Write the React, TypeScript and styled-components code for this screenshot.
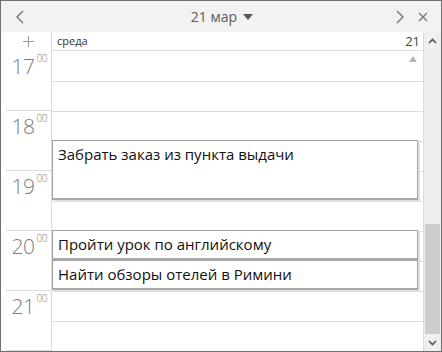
import * as React from 'react'
import styled, { createGlobalStyle } from 'styled-components'

const GlobalStyle = createGlobalStyle`
  html, body {
    margin: 0;
    padding: 0;
    background: #fff;
  }
  body {
    font-family: 'Open Sans', 'Noto Sans', sans-serif;
  }
`

type CalendarEvent = {
  title: string
  top: number
  height: number
}

const HOURS = [17, 18, 19, 20, 21]

const EVENTS: CalendarEvent[] = [
  { title: 'Забрать заказ из пункта выдачи', top: 108, height: 60 },
  { title: 'Пройти урок по английскому', top: 198, height: 30 },
  { title: 'Найти обзоры отелей в Римини', top: 228, height: 30 },
]

const Window = styled.div`
  box-sizing: border-box;
  width: 442px;
  height: 352px;
  border: 1px solid #707070;
  display: flex;
  flex-direction: column;
  overflow: hidden;
  background: #fff;
`

const Header = styled.div`
  height: 31px;
  flex-shrink: 0;
  background: #f2f2f2;
  display: flex;
  align-items: center;
  padding: 0 11px 0 12px;
`

const NavButton = styled.div`
  width: 14px;
  height: 14px;
  display: flex;
  align-items: center;
  justify-content: center;
`

const Title = styled.div`
  flex: 1;
  display: flex;
  align-items: center;
  justify-content: center;
  gap: 6px;
  font-size: 14px;
  color: #5a5a5a;
  padding-left: 24px;
`

const RightButtons = styled.div`
  display: flex;
  align-items: center;
  gap: 9px;
`

const Body = styled.div`
  flex: 1;
  display: flex;
  min-height: 0;
`

const Gutter = styled.div`
  width: 50px;
  flex-shrink: 0;
  border-right: 1px solid #dcdcdc;
  display: flex;
  flex-direction: column;
`

const PlusCell = styled.div`
  height: 20px;
  display: flex;
  align-items: center;
  justify-content: center;
  padding-left: 4px;
`

const HourBlock = styled.div`
  height: 60px;
  flex-shrink: 0;
  box-sizing: border-box;
  margin-left: 5px;
  border-bottom: 1px solid #dcdcdc;
  display: flex;
  justify-content: flex-end;
  padding: 2px 4px 0 0;
`

const HourLabel = styled.div`
  display: flex;
  align-items: flex-start;
  color: #7d7d7d;
  font-weight: 300;
  font-size: 21px;
  line-height: 26px;
  letter-spacing: -0.5px;

  sup {
    font-size: 10px;
    line-height: 12px;
    margin-left: 2px;
    margin-top: -1px;
  }
`

const DayColumn = styled.div`
  position: relative;
  flex: 1;
  border-right: 1px solid #dcdcdc;
  display: flex;
  flex-direction: column;
  overflow: hidden;
`

const DayHeader = styled.div`
  height: 19px;
  flex-shrink: 0;
  box-sizing: border-box;
  border-bottom: 1px solid #dcdcdc;
  display: flex;
  align-items: center;
  justify-content: space-between;
  padding: 0 3px 1px 5px;
  font-size: 11px;
  color: #333;
`

const DayNumber = styled.span`
  font-size: 13px;
  color: #444;
`

const Slots = styled.div`
  position: relative;
  padding-top: 1px;
`

const HalfSlot = styled.div`
  height: 30px;
  box-sizing: border-box;
  border-bottom: 1px solid #dcdcdc;
`

const MoreMarker = styled.div`
  position: absolute;
  right: 6px;
  top: 5px;
  width: 0;
  height: 0;
  border-left: 4px solid transparent;
  border-right: 4px solid transparent;
  border-bottom: 6px solid #b4b4b4;
`

const EventBox = styled.div`
  position: absolute;
  left: 0;
  width: 366px;
  box-sizing: border-box;
  background: #fff;
  border: 1px solid #a2a2a2;
  border-bottom: 2px solid #a8a8a8;
  box-shadow: 2px 2px 0 #dedede;
  padding: 3px 0 0 5px;
  font-size: 15px;
  line-height: 20px;
  color: #111;
  white-space: nowrap;
  overflow: hidden;
`

const Scrollbar = styled.div`
  width: 17px;
  flex-shrink: 0;
  background: #efefef;
  display: flex;
  flex-direction: column;
`

const ScrollArrow = styled.div`
  height: 17px;
  flex-shrink: 0;
  display: flex;
  align-items: center;
  justify-content: center;
`

const Track = styled.div`
  flex: 1;
  display: flex;
  flex-direction: column;
  justify-content: flex-end;
`

const Thumb = styled.div`
  height: 110px;
  margin: 0 1px;
  background: #cdcdcd;
`

const Chevron = ({ dir }: { dir: 'left' | 'right' }) => (
  <svg width="10" height="14" viewBox="0 0 10 14">
    <polyline
      points={dir === 'left' ? '8,1 2,7 8,13' : '2,1 8,7 2,13'}
      fill="none"
      stroke="#6e6e6e"
      strokeWidth="1.3"
    />
  </svg>
)

export default function App() {
  return (
    <>
      <GlobalStyle />
      <Window>
        <Header>
          <NavButton>
            <Chevron dir="left" />
          </NavButton>
          <Title>
            <span>21 мар</span>
            <svg width="10" height="6" viewBox="0 0 10 6">
              <polygon points="0,0 10,0 5,6" fill="#555" />
            </svg>
          </Title>
          <RightButtons>
            <NavButton>
              <Chevron dir="right" />
            </NavButton>
            <NavButton>
              <svg width="10" height="10" viewBox="0 0 10 10">
                <path d="M1 1 L9 9 M9 1 L1 9" stroke="#7a7a7a" strokeWidth="1.4" />
              </svg>
            </NavButton>
          </RightButtons>
        </Header>
        <Body>
          <Gutter>
            <PlusCell>
              <svg width="11" height="11" viewBox="0 0 11 11">
                <path d="M5.5 0 V11 M0 5.5 H11" stroke="#9a9a9a" strokeWidth="1" />
              </svg>
            </PlusCell>
            {HOURS.map(h => (
              <HourBlock key={h}>
                <HourLabel>
                  {h}
                  <sup>00</sup>
                </HourLabel>
              </HourBlock>
            ))}
          </Gutter>
          <DayColumn>
            <DayHeader>
              <span>среда</span>
              <DayNumber>21</DayNumber>
            </DayHeader>
            <Slots>
              <MoreMarker />
              {HOURS.flatMap(h => [h + 'a', h + 'b']).map(k => (
                <HalfSlot key={k} />
              ))}
            </Slots>
            {EVENTS.map(e => (
              <EventBox key={e.title} style={{ top: e.top, height: e.height }}>
                {e.title}
              </EventBox>
            ))}
          </DayColumn>
          <Scrollbar>
            <ScrollArrow>
              <svg width="9" height="6" viewBox="0 0 9 6">
                <polyline points="1,5 4.5,1.5 8,5" fill="none" stroke="#555" strokeWidth="1.6" />
              </svg>
            </ScrollArrow>
            <Track>
              <Thumb />
            </Track>
            <ScrollArrow>
              <svg width="9" height="6" viewBox="0 0 9 6">
                <polyline points="1,1 4.5,4.5 8,1" fill="none" stroke="#555" strokeWidth="1.6" />
              </svg>
            </ScrollArrow>
          </Scrollbar>
        </Body>
      </Window>
    </>
  )
}
